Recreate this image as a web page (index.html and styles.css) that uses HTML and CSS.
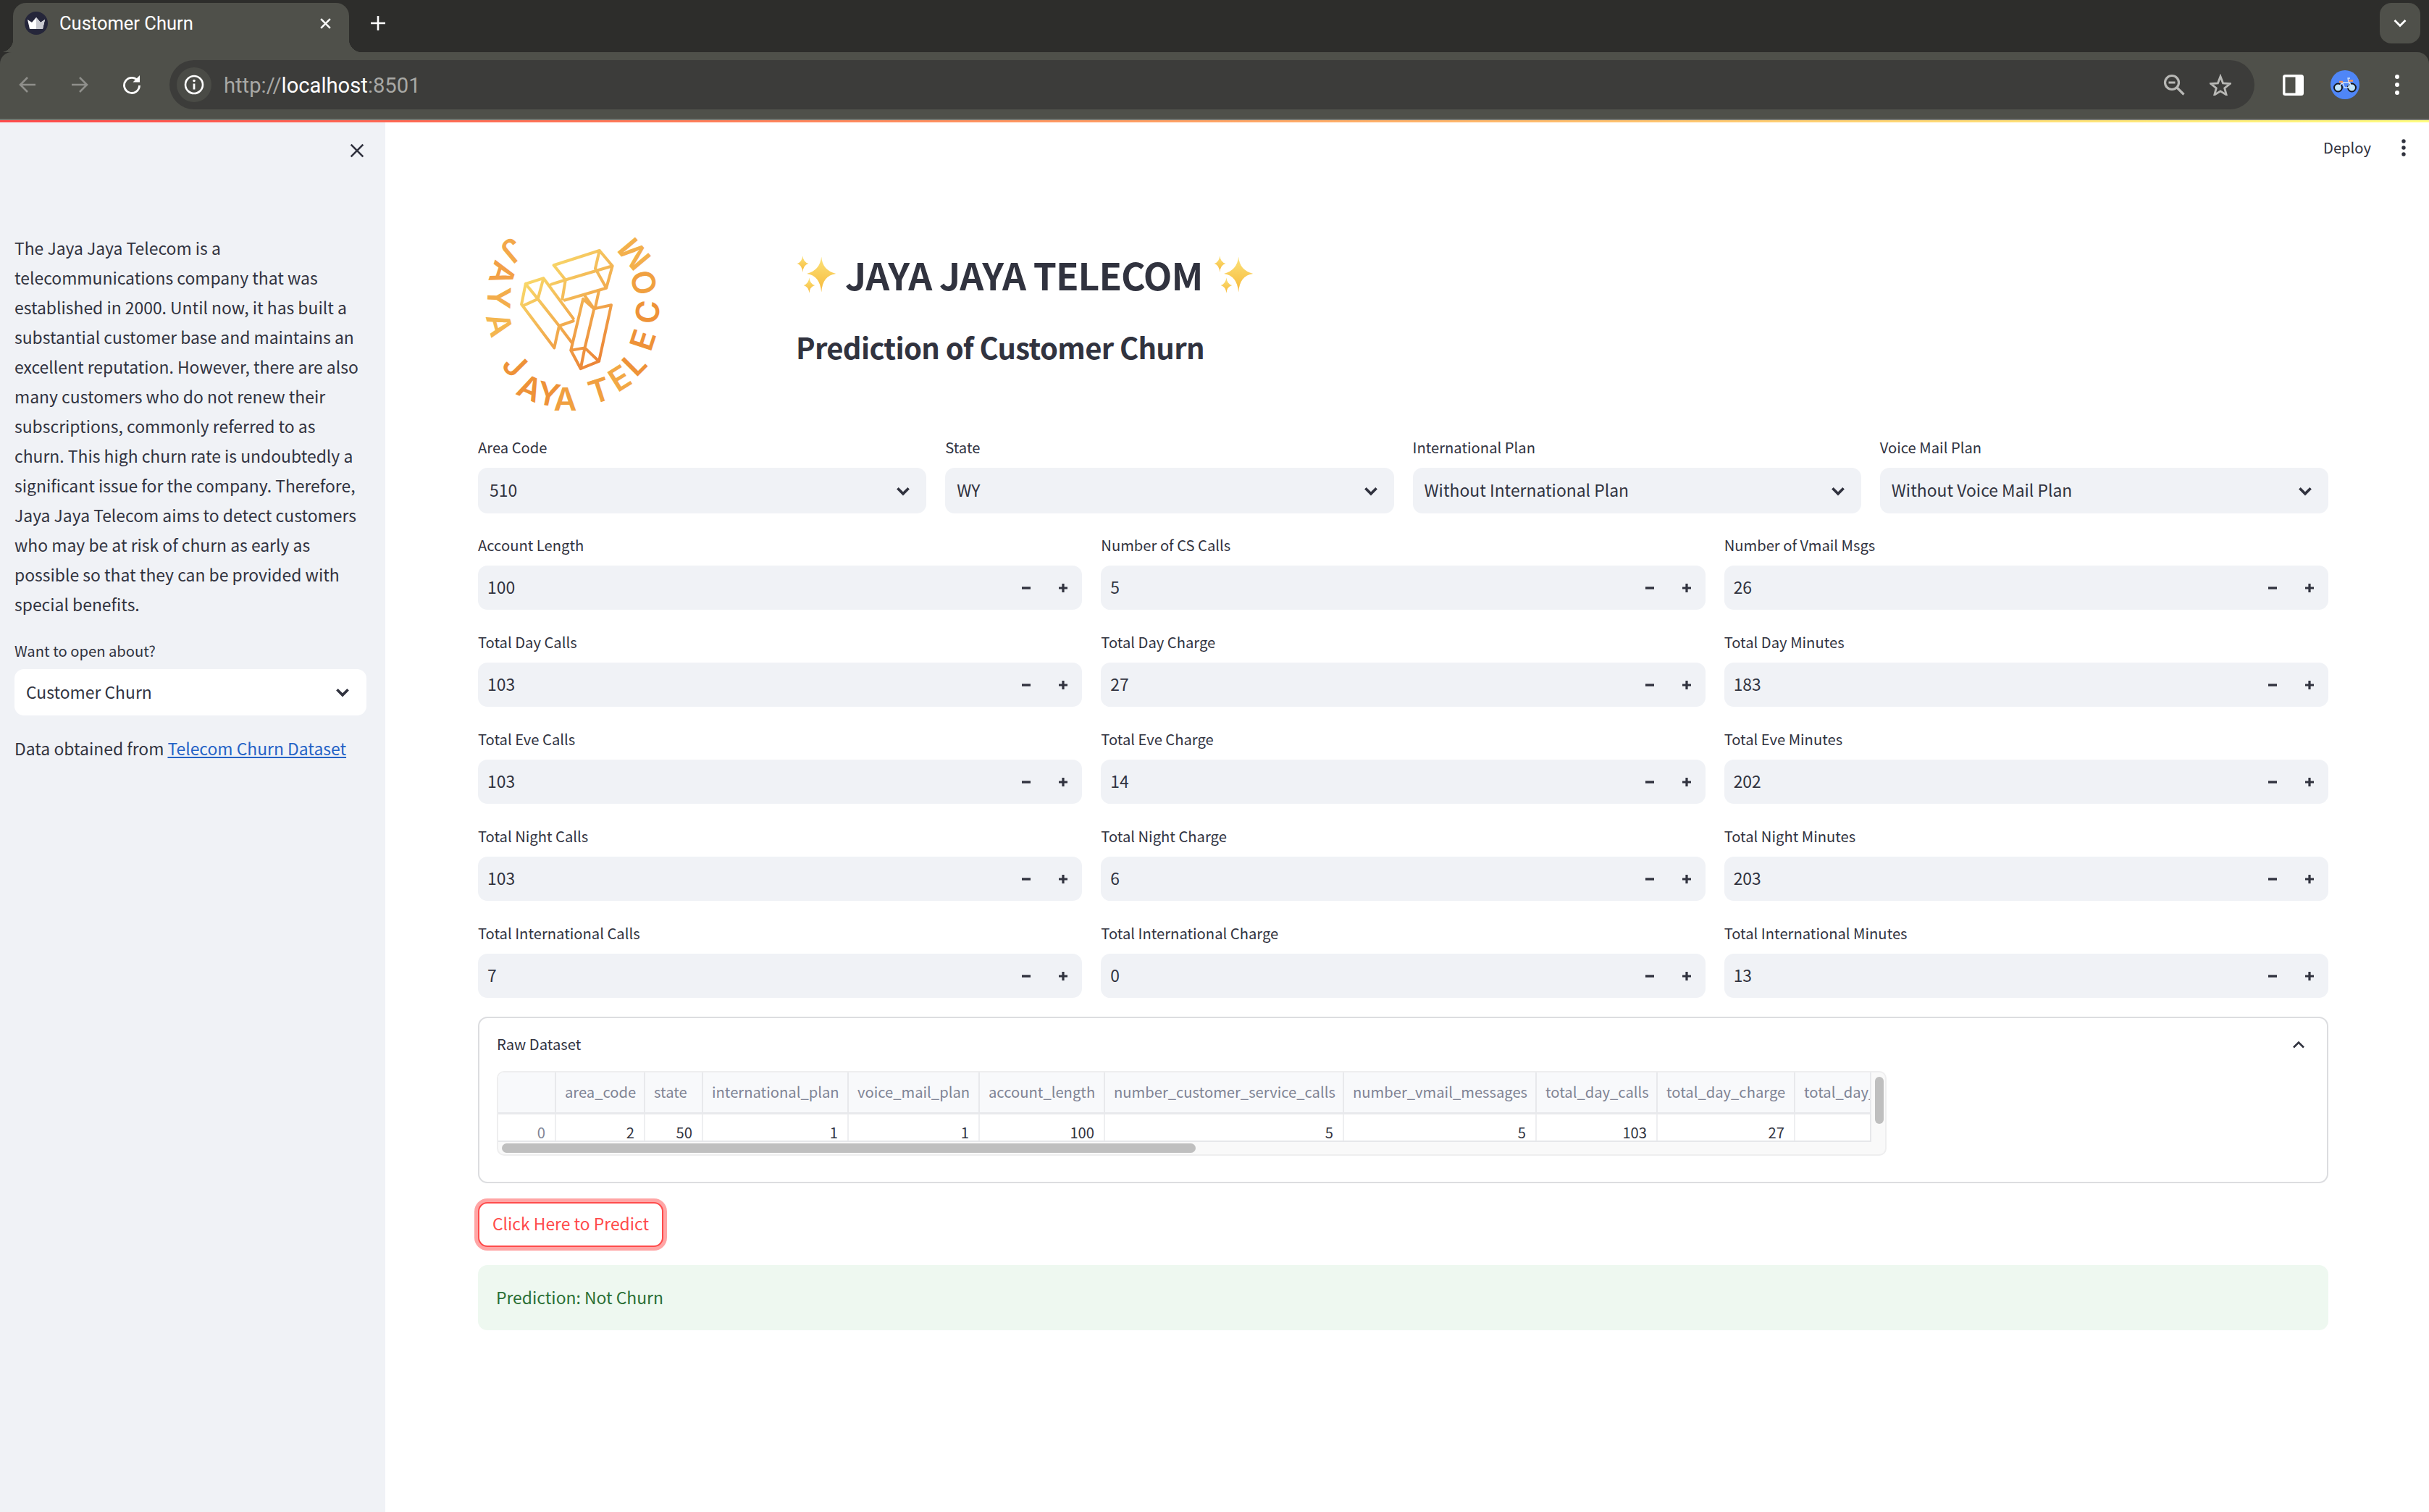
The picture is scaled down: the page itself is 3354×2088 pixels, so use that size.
FILE: index.html
```html
<!DOCTYPE html>
<html lang="en">
<head>
<meta charset="utf-8">
<title>Customer Churn</title>
<link rel="stylesheet" href="styles.css">
</head>
<body>
<svg class="sprite" width="0" height="0">
  <defs>
    <symbol id="i-minus" viewBox="0 0 16 16"><path d="M2 8h12" stroke="#31333f" stroke-width="3.4" fill="none"/></symbol>
    <symbol id="i-plus" viewBox="0 0 16 16"><path d="M2 8h12M8 2v12" stroke="#31333f" stroke-width="3.2" fill="none"/></symbol>
    <symbol id="i-chev" viewBox="0 0 24 24"><path d="M5 8.5l7 7 7-7" stroke="#31333f" stroke-width="3.4" fill="none"/></symbol>
    <linearGradient id="spark" x1="0" y1="0" x2="0" y2="1"><stop offset="0" stop-color="#fbe27a"/><stop offset="1" stop-color="#f7b93a"/></linearGradient>
    <symbol id="i-spark" viewBox="30 65 170 160">
      <path d="M135 72Q139 128 195 142Q139 150 135 218Q129 150 75 142Q129 128 135 72Z" fill="url(#spark)"/>
      <path d="M58 68Q60 94 82 100Q60 106 58 136Q55 106 35 100Q55 94 58 68Z" fill="url(#spark)"/>
      <path d="M85 158Q87 184 108 190Q87 196 85 222Q82 196 62 190Q82 184 85 158Z" fill="url(#spark)"/>
    </symbol>
  </defs>
</svg>

<header class="browser">
  <div class="tabstrip">
    <div class="tab">
      <svg class="favicon" viewBox="0 0 32 32"><circle cx="16" cy="16" r="16" fill="#25263a"/><path d="M4 11l6 4 6-7 6 7 6-4-3 13H7z" fill="#fff"/><path d="M16 8l6 7 6-4-3 13H16z" fill="#c9cad0"/></svg>
      <span class="tab-title">Customer Churn</span>
      <svg class="tab-x" viewBox="0 0 16 16"><path d="M2 2l12 12M14 2L2 14" stroke="#fff" stroke-width="2.4" fill="none"/></svg>
    </div>
    <svg class="new-tab" viewBox="0 0 20 20"><path d="M10 0v20M0 10h20" stroke="#fff" stroke-width="2.6" fill="none"/></svg>
    <div class="tab-menu"><svg viewBox="0 0 18 12"><path d="M1.5 2l7.5 7.5L16.500 2" stroke="#fff" stroke-width="2.8" fill="none"/></svg></div>
  </div>
  <div class="toolbar">
    <div class="slot"><svg viewBox="0 0 26 26"><path d="M24 13H3M13 3L3 13l10 10" stroke="#8f8f8b" stroke-width="2.6" fill="none"/></svg></div>
    <div class="slot"><svg viewBox="0 0 26 26"><path d="M2 13h21M13 3l10 10-10 10" stroke="#8f8f8b" stroke-width="2.6" fill="none"/></svg></div>
    <div class="slot"><svg viewBox="0 0 26 26"><path d="M22 8.500A10.500 10.500 0 1 0 23.500 14" stroke="#fff" stroke-width="2.8" fill="none"/><path d="M14.500 9.500H24V0z" fill="#fff"/></svg></div>
    <div class="address">
      <div class="site-info"><svg viewBox="0 0 28 28"><circle cx="14" cy="14" r="12" stroke="#fff" stroke-width="2.6" fill="none"/><path d="M14 12.500v8" stroke="#fff" stroke-width="2.800"/><circle cx="14" cy="8.500" r="1.800" fill="#fff"/></svg></div>
      <span class="url"><span class="url-dim">http://</span>localhost<span class="url-dim">:8501</span></span>
      <div class="addr-icons">
        <div class="addr-slot"><svg viewBox="0 0 30 30"><circle cx="12" cy="12" r="9.500" stroke="#b8b8b5" stroke-width="3.200" fill="none"/><path d="M7.500 12h9" stroke="#b8b8b5" stroke-width="3"/><path d="M19 19l9.500 9.500" stroke="#b8b8b5" stroke-width="3.200"/></svg></div>
        <div class="addr-slot"><svg viewBox="0 0 34 32"><path d="M17 3l4 10.500 11 .8-8.500 7 2.800 10.500L17 26l-9.300 5.800 2.800-10.500-8.500-7 11-.8z" stroke="#b8b8b5" stroke-width="3.200" fill="none"/></svg></div>
      </div>
    </div>
    <div class="slot"><svg class="panel-ic" viewBox="0 0 29 29"><rect width="29" height="29" rx="3.500" fill="#fff"/><rect x="3.500" y="3.500" width="14" height="22" fill="#4f504a"/></svg></div>
    <div class="slot"><svg class="avatar" viewBox="0 0 40 40"><circle cx="20" cy="20" r="20" fill="#4f86f7"/><circle cx="10.500" cy="24" r="5.500" fill="#bfe4fb" stroke="#14161c" stroke-width="2"/><circle cx="29.500" cy="24" r="5.500" fill="#bfe4fb" stroke="#14161c" stroke-width="2"/><path d="M10.500 24l6-7h10l3 7M16.500 17l3 7h5l2-7M25 17l-1-6h3" stroke="#d6e6fa" stroke-width="1.300" fill="none"/><path d="M12 16h5M25 14.500h6" stroke="#f2925e" stroke-width="2.400"/></svg></div>
    <div class="slot"><svg class="dots-ic" viewBox="0 0 6 28"><circle cx="3" cy="3" r="3" fill="#fff"/><circle cx="3" cy="14" r="3" fill="#fff"/><circle cx="3" cy="25" r="3" fill="#fff"/></svg></div>
  </div>
  <div class="rainbow"></div>
</header>

<div class="app">
  <aside class="sidebar">
    <div class="side-head"><svg class="side-x" viewBox="0 0 18 18"><path d="M1.500 1.500l15 15M16.500 1.500l-15 15" stroke="#31333f" stroke-width="2.400" fill="none"/></svg></div>
    <p class="about">The Jaya Jaya Telecom is a<br>telecommunications company that was<br>established in 2000. Until now, it has built a<br>substantial customer base and maintains an<br>excellent reputation. However, there are also<br>many customers who do not renew their<br>subscriptions, commonly referred to as<br>churn. This high churn rate is undoubtedly a<br>significant issue for the company. Therefore,<br>Jaya Jaya Telecom aims to detect customers<br>who may be at risk of churn as early as<br>possible so that they can be provided with<br>special benefits.</p>
    <div class="side-label">Want to open about?</div>
    <div class="select select-white"><span>Customer Churn</span><svg class="chev"><use href="#i-chev"/></svg></div>
    <p class="source">Data obtained from <a href="#">Telecom Churn Dataset</a></p>
  </aside>

  <main class="main">
    <div class="topbar">
      <span class="deploy">Deploy</span>
      <svg class="top-dots" viewBox="0 0 6 24"><circle cx="3" cy="3" r="2.700" fill="#31333f"/><circle cx="3" cy="12" r="2.700" fill="#31333f"/><circle cx="3" cy="21" r="2.700" fill="#31333f"/></svg>
    </div>
    <div class="content">
      <section class="hero">
        <div class="logo-col">
          <svg class="logo" viewBox="0 0 800 800">
            <defs><linearGradient id="lg" gradientUnits="userSpaceOnUse" x1="180" y1="200" x2="520" y2="600"><stop offset="0" stop-color="#f9dc6c"/><stop offset="1" stop-color="#ea7a30"/></linearGradient></defs>
            <g class="crystal" stroke="url(#lg)">
              <path d="M310 152L497 92L550 155L525 245L355 295M310 152L358 212L550 155M358 212L345 290M497 92L480 165L525 245"/>
              <path d="M195 228L268 205L390 370M195 228L178 312L312 490L332 400L245 290M190 315L245 290L195 228M268 205L245 290M332 400L390 380M332 400L385 470M300 230L358 212"/>
              <path d="M430 290L380 500L420 575L495 545L545 315L475 330L437 490L380 500M430 290L475 330M437 490L495 545M437 490L420 575M495 255L480 325M438 278L475 330"/>
            </g>
            <g class="ring">
              <text fill="#f3a84a" transform="translate(140 90) rotate(140)">J</text>
              <text fill="#f2a046" transform="translate(100 185) rotate(108)">A</text>
              <text fill="#f3ad4c" transform="translate(85 285) rotate(92)">Y</text>
              <text fill="#f4b650" transform="translate(88 395) rotate(75)">A</text>
              <text fill="#ee9238" transform="translate(150 560) rotate(45)">J</text>
              <text fill="#ee9238" transform="translate(212 655) rotate(24)">A</text>
              <text fill="#ee9238" transform="translate(288 680) rotate(12)">Y</text>
              <text fill="#f0a040" transform="translate(357 700) rotate(0)">A</text>
              <text fill="#f0a040" transform="translate(497 665) rotate(-18)">T</text>
              <text fill="#f2a845" transform="translate(580 615) rotate(-32)">E</text>
              <text fill="#ee9238" transform="translate(640 555) rotate(-45)">L</text>
              <text fill="#ee9238" transform="translate(675 458) rotate(-72)">E</text>
              <text fill="#ee9238" transform="translate(695 343) rotate(-85)">C</text>
              <text fill="#f0a040" transform="translate(680 222) rotate(-105)">O</text>
              <text fill="#f3b04c" transform="translate(640 105) rotate(-130)">M</text>
            </g>
          </svg>
        </div>
        <div class="title-col">
          <h1 class="title"><svg class="spark"><use href="#i-spark"/></svg><span class="title-text">JAYA JAYA TELECOM</span><svg class="spark"><use href="#i-spark"/></svg></h1>
          <h2 class="subtitle">Prediction of Customer Churn</h2>
        </div>
      </section>

      <div class="row row-4">
        <div class="field"><label class="label">Area Code</label><div class="select"><span>510</span><svg class="chev"><use href="#i-chev"/></svg></div></div>
        <div class="field"><label class="label">State</label><div class="select"><span>WY</span><svg class="chev"><use href="#i-chev"/></svg></div></div>
        <div class="field"><label class="label">International Plan</label><div class="select"><span>Without International Plan</span><svg class="chev"><use href="#i-chev"/></svg></div></div>
        <div class="field"><label class="label">Voice Mail Plan</label><div class="select"><span>Without Voice Mail Plan</span><svg class="chev"><use href="#i-chev"/></svg></div></div>
      </div>

      <div class="row row-3">
        <div class="field"><label class="label">Account Length</label><div class="num"><span>100</span><svg class="step step-m"><use href="#i-minus"/></svg><svg class="step"><use href="#i-plus"/></svg></div></div>
        <div class="field"><label class="label">Number of CS Calls</label><div class="num"><span>5</span><svg class="step step-m"><use href="#i-minus"/></svg><svg class="step"><use href="#i-plus"/></svg></div></div>
        <div class="field"><label class="label">Number of Vmail Msgs</label><div class="num"><span>26</span><svg class="step step-m"><use href="#i-minus"/></svg><svg class="step"><use href="#i-plus"/></svg></div></div>
      </div>
      <div class="row row-3">
        <div class="field"><label class="label">Total Day Calls</label><div class="num"><span>103</span><svg class="step step-m"><use href="#i-minus"/></svg><svg class="step"><use href="#i-plus"/></svg></div></div>
        <div class="field"><label class="label">Total Day Charge</label><div class="num"><span>27</span><svg class="step step-m"><use href="#i-minus"/></svg><svg class="step"><use href="#i-plus"/></svg></div></div>
        <div class="field"><label class="label">Total Day Minutes</label><div class="num"><span>183</span><svg class="step step-m"><use href="#i-minus"/></svg><svg class="step"><use href="#i-plus"/></svg></div></div>
      </div>
      <div class="row row-3">
        <div class="field"><label class="label">Total Eve Calls</label><div class="num"><span>103</span><svg class="step step-m"><use href="#i-minus"/></svg><svg class="step"><use href="#i-plus"/></svg></div></div>
        <div class="field"><label class="label">Total Eve Charge</label><div class="num"><span>14</span><svg class="step step-m"><use href="#i-minus"/></svg><svg class="step"><use href="#i-plus"/></svg></div></div>
        <div class="field"><label class="label">Total Eve Minutes</label><div class="num"><span>202</span><svg class="step step-m"><use href="#i-minus"/></svg><svg class="step"><use href="#i-plus"/></svg></div></div>
      </div>
      <div class="row row-3">
        <div class="field"><label class="label">Total Night Calls</label><div class="num"><span>103</span><svg class="step step-m"><use href="#i-minus"/></svg><svg class="step"><use href="#i-plus"/></svg></div></div>
        <div class="field"><label class="label">Total Night Charge</label><div class="num"><span>6</span><svg class="step step-m"><use href="#i-minus"/></svg><svg class="step"><use href="#i-plus"/></svg></div></div>
        <div class="field"><label class="label">Total Night Minutes</label><div class="num"><span>203</span><svg class="step step-m"><use href="#i-minus"/></svg><svg class="step"><use href="#i-plus"/></svg></div></div>
      </div>
      <div class="row row-3">
        <div class="field"><label class="label">Total International Calls</label><div class="num"><span>7</span><svg class="step step-m"><use href="#i-minus"/></svg><svg class="step"><use href="#i-plus"/></svg></div></div>
        <div class="field"><label class="label">Total International Charge</label><div class="num"><span>0</span><svg class="step step-m"><use href="#i-minus"/></svg><svg class="step"><use href="#i-plus"/></svg></div></div>
        <div class="field"><label class="label">Total International Minutes</label><div class="num"><span>13</span><svg class="step step-m"><use href="#i-minus"/></svg><svg class="step"><use href="#i-plus"/></svg></div></div>
      </div>

      <section class="expander">
        <div class="exp-head"><span class="exp-title">Raw Dataset</span><svg class="exp-chev" viewBox="0 0 24 24"><path d="M5 15.500l7-7 7 7" stroke="#31333f" stroke-width="2.600" fill="none"/></svg></div>
        <div class="frame">
          <div class="grid">
            <div class="hc"></div><div class="hc">area_code</div><div class="hc">state</div><div class="hc">international_plan</div><div class="hc">voice_mail_plan</div><div class="hc">account_length</div><div class="hc">number_customer_service_calls</div><div class="hc">number_vmail_messages</div><div class="hc">total_day_calls</div><div class="hc">total_day_charge</div><div class="hc">total_day_</div>
            <div class="dc dc-idx">0</div><div class="dc">2</div><div class="dc">50</div><div class="dc">1</div><div class="dc">1</div><div class="dc">100</div><div class="dc">5</div><div class="dc">5</div><div class="dc">103</div><div class="dc">27</div><div class="dc"></div>
          </div>
          <div class="thumb-h"></div>
          <div class="thumb-v"></div>
        </div>
      </section>

      <button class="predict">Click Here to Predict</button>
      <div class="alert">Prediction: Not Churn</div>
    </div>
  </main>
</div>
</body>
</html>
```

FILE: styles.css
```css
* { box-sizing: border-box; }
html, body { margin: 0; padding: 0; }
body {
  width: 3354px;
  height: 2088px;
  overflow: hidden;
  display: flex;
  flex-direction: column;
  background: #fff;
  color: #31333f;
  font-family: "Noto Sans CJK SC", "Noto Sans", sans-serif;
  font-size: 22.9px;
}
.sprite { position: absolute; }

/* browser chrome */
.browser { flex: none; font-family: Roboto, sans-serif; background: #2d2d2b; }
.tabstrip { height: 72px; display: flex; align-items: flex-start; padding: 4px 12px 0 18px; }
.tab {
  position: relative;
  width: 464px;
  height: 68px;
  background: #4f504a;
  border-radius: 18px 18px 0 0;
  display: flex;
  align-items: center;
  padding: 0 24px 12px 16px;
  color: #fff;
}
.tab::before, .tab::after {
  content: "";
  position: absolute;
  bottom: 0;
  width: 18px;
  height: 18px;
}
.tab::before { left: -18px; background: radial-gradient(circle at 0 0, transparent 18px, #4f504a 18.500px); }
.tab::after { right: -18px; background: radial-gradient(circle at 100% 0, transparent 18px, #4f504a 18.500px); }
.favicon { width: 32px; height: 32px; flex: none; }
.tab-title { margin-left: 16px; flex: 1; font-size: 25.5px; }
.tab-x { width: 17px; height: 17px; flex: none; }
.new-tab { width: 20px; height: 20px; margin: 18px 0 0 30px; flex: none; }
.tab-menu {
  margin-left: auto;
  width: 56px;
  height: 56px;
  border-radius: 16px;
  background: #4f504a;
  display: flex;
  align-items: center;
  justify-content: center;
}
.tab-menu svg { width: 18px; height: 12px; }
.toolbar {
  height: 94px;
  padding: 0 8px 2px 2px;
  display: flex;
  align-items: center;
  background: #4f504a;
  border-radius: 16px 16px 0 0;
  border-bottom: 2px solid #76766f;
  color: #fff;
}
.slot { width: 72px; height: 60px; display: flex; align-items: center; justify-content: center; flex: none; }
.slot svg { width: 26px; height: 26px; }
.slot .panel-ic { width: 29px; height: 29px; }
.slot .avatar { width: 40px; height: 40px; }
.slot .dots-ic { width: 6px; height: 28px; }
.address {
  flex: 1;
  height: 68px;
  margin: 0 17px 0 16px;
  padding: 0 15px 0 10px;
  background: #3c3c3a;
  border-radius: 34px;
  display: flex;
  align-items: center;
}
.site-info { width: 48px; height: 48px; border-radius: 50%; background: #4a4b46; display: flex; align-items: center; justify-content: center; flex: none; }
.site-info svg { width: 28px; height: 28px; }
.url { margin-left: 17px; flex: 1; font-size: 29.2px; padding-top: 1px; }
.url-dim { color: #a8a8a5; }
.addr-icons { display: flex; }
.addr-slot { width: 64px; display: flex; align-items: center; justify-content: center; }
.addr-slot svg { width: 30px; height: 30px; }
.rainbow { height: 3px; background: linear-gradient(90deg, #ff4b4b, #fffd80); }

/* app */
.app { flex: 1; display: flex; min-height: 0; }
.sidebar { width: 532px; flex: none; background: #f0f2f6; padding: 0 26px 0 20px; }
.side-head { height: 78px; display: flex; align-items: center; justify-content: flex-end; margin-bottom: 75px; }
.side-x { width: 20px; height: 20px; margin-right: 3px; }
.about { margin: 0; line-height: 41px; white-space: nowrap; }
.side-label { margin-top: 26px; height: 35px; font-size: 20.2px; line-height: 36px; margin-bottom: 8px; }
.source { margin: 25px 0 0; line-height: 41px; white-space: nowrap; }
.source a { color: #2563c6; text-decoration: underline; }

.main { flex: 1; min-width: 0; }
.topbar { height: 70px; display: flex; align-items: center; justify-content: flex-end; padding-right: 32px; }
.deploy { font-size: 20.2px; margin: 0 42px 2px 0; }
.top-dots { width: 6px; height: 24px; }
.content { padding: 76px 139px 0 128px; display: flex; flex-direction: column; align-items: stretch; }
.hero { height: 285px; display: flex; }
.logo-col { width: 439px; flex: none; }
.logo { width: 270px; height: 270px; display: block; }
.crystal { fill: none; stroke-width: 12; stroke-linejoin: round; stroke-linecap: round; }
.ring text {
  font-family: Inter, sans-serif;
  font-weight: 600;
  font-size: 130px;
  text-anchor: middle;
  dominant-baseline: central;
}
.title-col { padding-top: 35px; }
.title {
  margin: 0;
  height: 58px;
  display: flex;
  align-items: center;
  gap: 15px;
  font-size: 51.5px;
  line-height: 58px;
  font-weight: 600;
  letter-spacing: -1px;
  white-space: nowrap;
}
.title-text { margin-left: -4px; }
.spark { width: 57px; height: 54px; flex: none; }
.subtitle { margin: 42px 0 0; font-size: 40px; line-height: 58px; font-weight: 600; letter-spacing: -.68px; }

.row { display: grid; gap: 26px; margin-bottom: 26px; }
.row-4 { grid-template-columns: repeat(4, 1fr); }
.row-3 { grid-template-columns: repeat(3, 1fr); margin-bottom: 27px; }
.field { min-width: 0; }
.label { display: block; height: 46px; font-size: 20.2px; line-height: 36px; }
.select, .num {
  display: flex;
  align-items: center;
  background: #f0f2f6;
  border-radius: 13px;
}
.select span, .num span { margin-bottom: 3px; }
.select { height: 63px; padding: 0 19px 0 16px; justify-content: space-between; }
.select-white { background: #fff; height: 64px; padding-right: 20px; }
.chev { width: 26px; height: 26px; flex: none; }
.num { height: 61px; padding: 0 18px 0 13px; }
.num span { flex: 1; }
.step { width: 16px; height: 16px; flex: none; }
.step-m { margin-right: 35px; }

.expander {
  height: 230px;
  margin-top: -1px;
  border: 2px solid #dcdde0;
  border-radius: 13px;
  padding: 0 24px;
}
.exp-head { height: 73px; display: flex; align-items: center; justify-content: space-between; font-size: 20.2px; }
.exp-title { margin-bottom: 3px; }
.exp-chev { width: 24px; height: 24px; margin-right: 3px; }
.frame {
  position: relative;
  width: 1919px;
  height: 117px;
  background: #f9f9f9;
  border: 2px solid #eeeeef;
  border-radius: 10px;
  overflow: hidden;
}
.grid {
  width: 1896px;
  display: grid;
  grid-template-columns: 80px 123px 80px 201px 181px 173px 330px 266px 167px 190px 105px;
  grid-template-rows: 58px 36px;
  background: #fff;
  border-right: 2px solid #e6e7ea;
  border-bottom: 2px solid #e6e7ea;
  font-size: 20.2px;
}
.hc {
  background: #f8f9fb;
  color: #808495;
  border-right: 2px solid #e8e9ec;
  border-bottom: 3px solid #e8e9ec;
  padding: 0 12px;
  line-height: 54px;
  white-space: nowrap;
  overflow: hidden;
}
.hc:last-child { padding-right: 0; }
.dc {
  border-right: 2px solid #eeeff1;
  padding: 14px 13px 0;
  text-align: right;
  line-height: 22px;
  overflow: hidden;
  white-space: nowrap;
}
.dc-idx { color: #808495; }
.hc:last-child, .dc:last-child { border-right: 0; }
.thumb-h { position: absolute; left: 5px; top: 98px; width: 958px; height: 13px; border-radius: 7px; background: #bfbfbf; }
.thumb-v { position: absolute; right: 2px; top: 6px; width: 12px; height: 65px; border-radius: 6px; background: #bfbfbf; }

.predict {
  align-self: flex-start;
  margin-top: 26px;
  width: 256px;
  height: 62px;
  background: #fff;
  border: 2px solid #ff4b4b;
  border-radius: 13px;
  box-shadow: 0 0 0 5px rgba(255, 75, 75, .5);
  color: #ff4b4b;
  font: inherit;
  padding: 0 0 4px;
}
.alert {
  margin-top: 25px;
  height: 90px;
  padding: 0 25px 2px;
  display: flex;
  align-items: center;
  background: #eef8f0;
  border-radius: 13px;
  color: #2a6f35;
}
```
